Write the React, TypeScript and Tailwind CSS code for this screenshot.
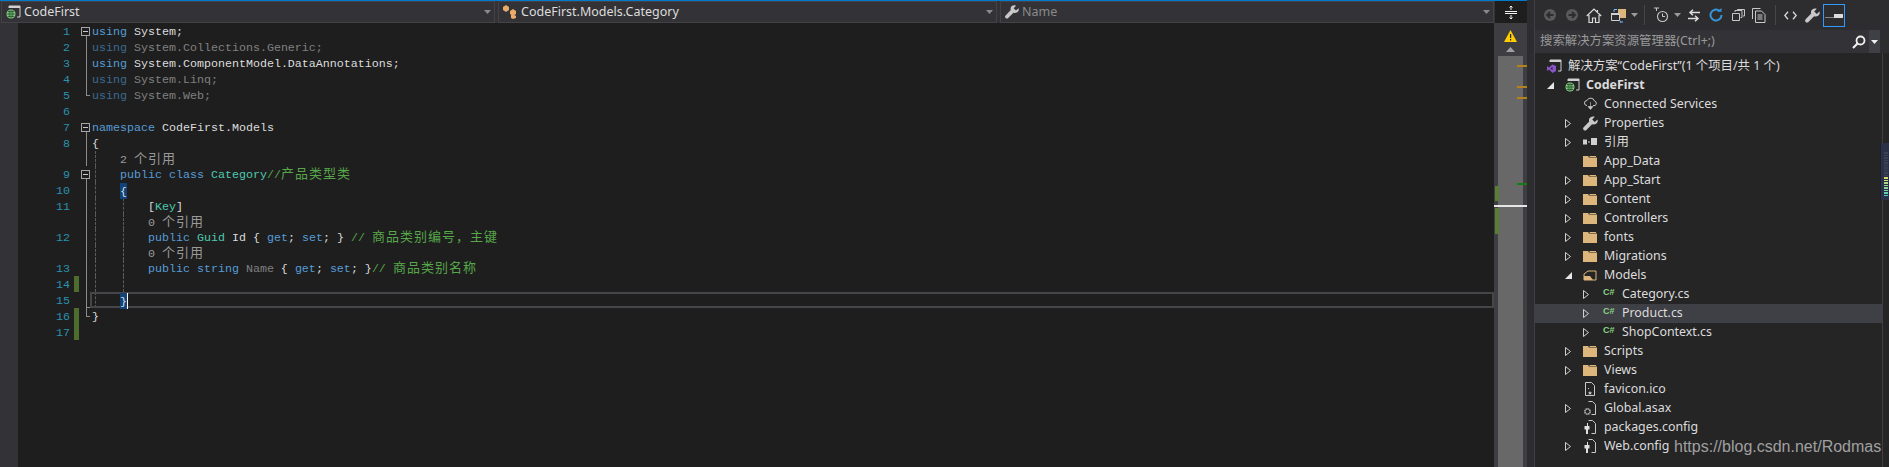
import type { ReactNode } from "react"

const mono = "font-['Liberation_Mono','Noto_Sans_CJK_SC',monospace] text-[11.67px] leading-[16px] whitespace-pre"
const ui = "font-['Noto_Sans','Noto_Sans_CJK_SC',sans-serif]"

function Cjk({ children }: { children: ReactNode }) {
  return <span className="font-['Noto_Sans_CJK_SC',sans-serif] text-[13px] leading-[8px] tracking-[1px]">{children}</span>
}
const K = ({ children }: { children: ReactNode }) => <span className="text-[#569cd6]">{children}</span>
const KD = ({ children }: { children: ReactNode }) => <span className="text-[#3c6a8f]">{children}</span>
const T = ({ children }: { children: ReactNode }) => <span className="text-[#4ec9b0]">{children}</span>
const C = ({ children }: { children: ReactNode }) => <span className="text-[#57a64a]">{children}</span>
const W = ({ children }: { children: ReactNode }) => <span className="text-[#dcdcdc]">{children}</span>
const D = ({ children }: { children: ReactNode }) => <span className="text-[#808080]">{children}</span>

function FoldBox() {
  return (
    <span className="absolute left-[81px] top-[4px] w-[9px] h-[9px] border border-[#a5a5a5] bg-[#1e1e1e] flex items-center justify-center">
      <span className="w-[5px] h-px bg-[#c8c8c8]" />
    </span>
  )
}

function Brace({ children, caret }: { children: ReactNode; caret?: boolean }) {
  return (
    <span className={`relative z-10 inline-block h-[16px] pt-px bg-[#114279] text-[#dcdcdc] ${caret ? "border-r border-white" : ""}`}>
      {children}
    </span>
  )
}

type Fold = "box" | "line" | "end" | "endfull" | "none"

function Row({
  num,
  fold = "none",
  changed,
  guides = [],
  hint,
  current,
  children,
}: {
  num?: number
  fold?: Fold
  changed?: boolean
  guides?: number[]
  hint?: boolean
  current?: boolean
  children?: ReactNode
}) {
  return (
    <div className={`relative flex items-start ${hint ? "h-[15px]" : "h-[16px]"}`}>
      <span className="w-[71px] pt-px pr-[1px] text-right text-[#2b91af] shrink-0">{num}</span>
      <span className={`w-[5px] h-full ml-[3px] shrink-0 ${changed ? "bg-[#4c6d2d]" : ""}`} />
      <span className="pl-[13px] pt-px">{children}</span>
      {fold === "line" && <span className="absolute left-[86px] top-0 bottom-0 w-px bg-[#8c8c8c]" />}
      {fold === "box" && <span className="absolute left-[86px] top-[12px] bottom-0 w-px bg-[#8c8c8c]" />}
      {fold === "box" && <FoldBox />}
      {fold === "end" && (
        <span className="absolute left-[86px] top-0 h-[9px] w-[4px] border-l border-b border-[#8c8c8c]" />
      )}
      {fold === "endfull" && (
        <span className="absolute left-[86px] top-0 bottom-0 w-[4px] border-l border-b border-[#8c8c8c]" />
      )}
      {guides.map((g) => (
        <span key={g} className="absolute top-0 bottom-0 w-0 border-l border-dashed border-[#5a5a5a]" style={{ left: g }} />
      ))}
      {current && (
        <span className="absolute left-[90px] right-0 top-0 bottom-0 border-2 border-[#46464a]" />
      )}
    </div>
  )
}

function Combo({ width, children, dim }: { width: string; children: ReactNode; dim?: boolean }) {
  return (
    <div className={`${width} h-[22px] shrink-0 flex items-center border border-[#434346] bg-[#333337] ${dim ? "text-[#8a8a8a]" : "text-[#dcdcdc]"}`}>
      {children}
      <svg className="ml-auto mr-[3px]" width="7" height="4" viewBox="0 0 7 4"><path d="M0 0h7L3.5 4z" fill="#8a8a8e" /></svg>
    </div>
  )
}

function ProjectIcon() {
  return (
    <svg width="15" height="14" viewBox="0 0 15 14">
      <path d="M3 3V1h11v11h-3" fill="none" stroke="#d0d0d0" />
      <rect x="3" y="1" width="11" height="2" fill="#d0d0d0" />
      <circle cx="5" cy="9" r="4.5" fill="#8cd18c" />
      <path d="M1 9h8M5 5v8M2 6.5h6M2 11.5h6M3.2 5.5v7M6.8 5.5v7" stroke="#25522a" strokeWidth="0.8" />
    </svg>
  )
}

function Folder() {
  return (
    <svg width="14" height="12" viewBox="0 0 14 12">
      <path d="M0 1h5l1 1.5h8V12H0z" fill="#dcb67a" />
      <path d="M6 1h7v1H7z" fill="#dcb67a" />
    </svg>
  )
}
function OpenFolder() {
  return (
    <svg width="14" height="12" viewBox="0 0 14 12">
      <path d="M1 11V5l4-3h8v9z" fill="none" stroke="#dcb67a" />
      <path d="M1 7h6l3 4H1z" fill="#dcb67a" />
    </svg>
  )
}
function CsIcon() {
  return <span className="text-[#89d185] font-['Liberation_Sans',sans-serif] font-bold text-[9px] leading-none -mt-[3px] ml-[2px]">C#</span>
}
function WrenchIcon({ color = "#c8c8c8", size = 14 }: { color?: string; size?: number }) {
  return (
    <svg width={size} height={size} viewBox="0 0 14 14">
      <path d="M13.5 3.2 11 5.6 8.6 3.2 11 .8C9-.2 6.6.6 5.8 2.6c-.3.9-.3 1.7 0 2.5L.6 10.4c-.7.7-.7 1.8 0 2.6.8.7 1.9.7 2.6 0l5.3-5.3c2.2.8 4.6-.3 5.2-2.500.2-.7.1-1.4-.2-2z" fill={color} />
    </svg>
  )
}
function FileIcon({ kind }: { kind: "ico" | "gear" | "config" }) {
  return (
    <svg width="14" height="15" viewBox="0 0 14 15">
      <path d={kind === "ico" ? "M2.5.5h6l3 3v10h-9z" : "M5.5.5h4l3 3v10h-4"} fill="none" stroke="#c8c8c8" />
      {kind === "ico" && <path d="M5 6h1v1H5zM7 9l.6 1.3 1.4.1-1 1 .3 1.4L7 12l-1.3.8.3-1.4-1-1 1.4-.1z" fill="#c8c8c8" />}
      {kind === "gear" && (
        <g>
          <circle cx="4.5" cy="10.5" r="2.6" fill="none" stroke="#b4b4b4" strokeWidth="1.6" strokeDasharray="1.4 .6" />
          <circle cx="4.5" cy="10.5" r="3" fill="none" stroke="#8a8a8a" strokeWidth=".6" />
        </g>
      )}
      {kind === "config" && <path d="M3 3v3H1.5v3.5H3V14h2V9.500h1.500V6H5V3H4v3H3z" fill="#e0e0e0" />}
    </svg>
  )
}

function Chevron({ open }: { open?: boolean }) {
  if (open) {
    return <svg width="7" height="7" viewBox="0 0 7 7"><path d="M7 0v7H0z" fill="#e6e6e6" /></svg>
  }
  return <svg width="6" height="9" viewBox="0 0 6 9"><path d="M.5.5l5 4-5 4z" fill="none" stroke="#d0d0d0" /></svg>
}

function TreeRow({
  level,
  arrow,
  icon,
  selected,
  bold,
  children,
}: {
  level: 1 | 2 | 3
  arrow?: "open" | "closed"
  icon: ReactNode
  selected?: boolean
  bold?: boolean
  children: ReactNode
}) {
  const pad = level === 1 ? "pl-[8px]" : level === 2 ? "pl-[26px]" : "pl-[44px]"
  return (
    <div className={`h-[19px] flex items-center ${pad} ${selected ? "bg-[#3f3f46]" : ""}`}>
      <span className="w-[22px] flex justify-start pl-[4px] shrink-0">
        {arrow === "open" && <Chevron open />}
        {arrow === "closed" && <Chevron />}
      </span>
      <span className="w-[21px] flex shrink-0">{icon}</span>
      <span className={bold ? "font-bold" : ""}>{children}</span>
    </div>
  )
}

function Sep() {
  return <span className="w-px h-[20px] bg-[#46464a] shrink-0" />
}
function Caret() {
  return <svg width="7" height="4" viewBox="0 0 7 4"><path d="M0 0h7L3.500 4z" fill="#9a9a9a" /></svg>
}

function Toolbar() {
  return (
    <div className="h-[30px] flex items-center pl-[4px] shrink-0">
      <span className="w-[22px] flex justify-center">
        <svg width="14" height="14" viewBox="0 0 14 14"><circle cx="7" cy="7" r="6" fill="#5a5a5a" /><path d="M10.500 7H4M7 4 4 7l3 3" stroke="#2d2d30" strokeWidth="1.800" fill="none" /></svg>
      </span>
      <span className="w-[22px] flex justify-center">
        <svg width="14" height="14" viewBox="0 0 14 14"><circle cx="7" cy="7" r="6" fill="#5a5a5a" /><path d="M3.500 7H10M7 4l3 3-3 3" stroke="#2d2d30" strokeWidth="1.800" fill="none" /></svg>
      </span>
      <span className="w-[22px] flex justify-center">
        <svg width="16" height="15" viewBox="0 0 16 15"><path d="M.8 8 8 1l7.200 7M3 7v7.500h3.500V10h3v4.500H13V7M11.500 2v3" fill="none" stroke="#dcdcdc" strokeWidth="1.200" /></svg>
      </span>
      <span className="w-[26px] flex justify-center">
        <svg width="15" height="15" viewBox="0 0 15 15">
          <path d="M7 1h8v9H7z" fill="#dcb67a" />
          <path d="M.5 5.500h8v7h-8z" fill="#2d2d30" stroke="#d0d0d0" />
          <rect x="0" y="5" width="9" height="2" fill="#d0d0d0" />
          <path d="M3 1.500H6M12 14h-2" stroke="#75beff" strokeWidth="1.200" />
          <path d="M2 3l1.500-2v3zM10 12.500 8.500 14 10 15z" fill="#75beff" />
        </svg>
      </span>
      <span className="w-[7px] flex justify-center"><Caret /></span>
      <span className="w-[6px]" />
      <Sep />
      <span className="w-[5px]" />
      <span className="w-[22px] flex justify-center">
        <svg width="15" height="16" viewBox="0 0 15 16"><path d="M0 1h5M2.500 1v3" stroke="#c8c8c8" fill="none" /><circle cx="8.500" cy="9.500" r="5" fill="none" stroke="#c8c8c8" strokeWidth="1.100" /><path d="M8.500 6.500v3h2.500" fill="none" stroke="#c8c8c8" /></svg>
      </span>
      <span className="w-[2px]" />
      <span className="w-[7px] flex justify-center"><Caret /></span>
      <span className="w-[2px]" />
      <span className="w-[22px] flex justify-center">
        <svg width="14" height="13" viewBox="0 0 14 13"><path d="M13 3.500H3M6 .8 3 3.500l3 2.700M1 9.500h10M8 6.800l3 2.700-3 2.700" fill="none" stroke="#dcdcdc" strokeWidth="1.500" /></svg>
      </span>
      <span className="w-[22px] flex justify-center">
        <svg width="14" height="14" viewBox="0 0 14 14"><path d="M10.500 2.800A5.500 5.500 0 1 0 12.500 7" fill="none" stroke="#3794d8" strokeWidth="2" /><path d="M8 3.800h4.500V0z" fill="#3794d8" /></svg>
      </span>
      <span className="w-[22px] flex justify-center">
        <svg width="13" height="12" viewBox="0 0 13 12"><path d="M.5 4.500h7v7h-7zM3 3V1.500h7v7H8.500M5.500 1V.5h7v6.500H11" fill="none" stroke="#c8c8c8" /></svg>
      </span>
      <span className="w-[20px] flex justify-center">
        <svg width="14" height="15" viewBox="0 0 14 15"><path d="M.5 11V.5h8M3.500 3h6l3.500 3.500v8H3.500z" fill="none" stroke="#c8c8c8" /><path d="M5.500 7h5M5.500 9h5M5.500 11h5" stroke="#c8c8c8" /></svg>
      </span>
      <span className="w-[6px]" />
      <Sep />
      <span className="w-[3px]" />
      <span className="w-[22px] flex justify-center">
        <svg width="13" height="9" viewBox="0 0 13 9"><path d="M4 .8.8 4.500 4 8.200M9 .8l3.200 3.700L9 8.200" fill="none" stroke="#dcdcdc" strokeWidth="1.300" /></svg>
      </span>
      <span className="w-[22px] flex justify-center"><WrenchIcon size={15} /></span>
      <span className="w-[22px] h-[23px] border border-[#3399ff] flex items-end justify-center pb-[7px] shrink-0">
        <svg width="18" height="5" viewBox="0 0 18 5"><path d="M0 3.500h9V4H0z" fill="#dcdcdc" /><path d="M9 0h9v4H9z" fill="#dcdcdc" /></svg>
      </span>
    </div>
  )
}

export default function App() {
  return (
    <div className="w-[1889px] h-[467px] overflow-hidden flex bg-[#2d2d30] relative">
      {/* editor */}
      <div className="w-[1527px] h-full flex flex-col shrink-0 border-t border-[#007acc]">
        <div className={`h-[22px] flex shrink-0 bg-[#333337] text-[12.5px] pl-[1px] gap-[3px] pr-[33px] ${ui}`}>
          <Combo width="w-[494px]">
            <span className="ml-[4px] mr-[3px] flex"><ProjectIcon /></span>
            CodeFirst
          </Combo>
          <Combo width="w-[499px]">
            <svg className="ml-[4px] mr-[4px]" width="14" height="14" viewBox="0 0 14 14">
              <path d="M3 0l3 2v3L3 7 0 5V2zM10 4l3 2v3l-3 2-3-2V6zM8 10l2-1 3 2v2l-3 1-2-1z" fill="#e8ab6a" />
            </svg>
            CodeFirst.Models.Category
          </Combo>
          <Combo width="flex-1" dim>
            <span className="ml-[4px] mr-[3px] flex"><WrenchIcon /></span>
            Name
          </Combo>
        </div>

        <div className="flex-1 flex min-h-0">
          <div className={`flex-1 min-w-0 bg-[#1e1e1e] ${mono}`}>
            <div className="h-full border-l-[18px] border-[#333337]">
              <div className="-ml-[18px]">
                <Row num={1} fold="box"><K>using</K> <W>System;</W></Row>
                <Row num={2} fold="line"><KD>using</KD> <D>System.Collections.Generic;</D></Row>
                <Row num={3} fold="line"><K>using</K> <W>System.ComponentModel.DataAnnotations;</W></Row>
                <Row num={4} fold="line"><KD>using</KD> <D>System.Linq;</D></Row>
                <Row num={5} fold="end"><KD>using</KD> <D>System.Web;</D></Row>
                <Row num={6} />
                <Row num={7} fold="box"><K>namespace</K> <W>CodeFirst.Models</W></Row>
                <Row num={8} fold="line"><W>{"{"}</W></Row>
                <Row hint fold="line" guides={[95]}><span className="text-[#999999]">{"    2 "}<Cjk>个引用</Cjk></span></Row>
                <Row num={9} fold="box" guides={[95]}><K>{"    public class "}</K><T>Category</T><C>//<Cjk>产品类型类</Cjk></C></Row>
                <Row num={10} fold="line" guides={[95]}>
                  {"    "}<Brace>{"{"}</Brace>
                </Row>
                <Row num={11} fold="line" guides={[95, 123]}><W>{"        ["}</W><T>Key</T><W>]</W></Row>
                <Row hint fold="line" guides={[95, 123]}><span className="text-[#999999]">{"        0 "}<Cjk>个引用</Cjk></span></Row>
                <Row num={12} fold="line" guides={[95, 123]}>
                  <K>{"        public "}</K><T>Guid</T><W>{" Id { "}</W><K>get</K><W>; </W><K>set</K><W>{"; } "}</W><C>{"// "}<Cjk>商品类别编号，主键</Cjk></C>
                </Row>
                <Row hint fold="line" guides={[95, 123]}><span className="text-[#999999]">{"        0 "}<Cjk>个引用</Cjk></span></Row>
                <Row num={13} fold="line" guides={[95, 123]}>
                  <K>{"        public string "}</K><D>Name</D><W>{" { "}</W><K>get</K><W>; </W><K>set</K><W>{"; }"}</W><C>{"// "}<Cjk>商品类别名称</Cjk></C>
                </Row>
                <Row num={14} fold="line" changed guides={[95, 123]} />
                <Row num={15} fold="endfull" guides={[95]} current>
                  {"    "}<Brace caret>{"}"}</Brace>
                </Row>
                <Row num={16} fold="end" changed><W>{"}"}</W></Row>
                <Row num={17} changed />
              </div>
            </div>
          </div>

          {/* editor scrollbar */}
          <div className="w-[33px] h-full bg-[#3e3e42] relative flex flex-col items-center shrink-0">
            <svg className="mt-[7px]" width="13" height="12" viewBox="0 0 13 12">
              <path d="M6.500 0 13 12H0z" fill="#ffcc00" />
              <path d="M6 4h1.200v4H6zM6 9h1.200v1.500H6z" fill="#1e1e1e" />
            </svg>
            <svg className="mt-[5px]" width="9" height="5" viewBox="0 0 9 5"><path d="M4.500 0 9 5H0z" fill="#a0a0a0" /></svg>
            <div className="w-[25px] flex-1 mt-[4px] bg-[#686868]" />
            <span className="absolute right-0 top-[42px] w-[10px] h-[2px] bg-[#b5811c]" />
            <span className="absolute right-0 top-[63px] w-[10px] h-[2px] bg-[#b5811c]" />
            <span className="absolute right-0 top-[74px] w-[10px] h-[2px] bg-[#b5811c]" />
            <span className="absolute right-0 top-[160px] w-[10px] h-[2px] bg-[#147d14]" />
            <span className="absolute left-[1px] top-[163px] w-[4px] h-[15px] bg-[#5a7d34]" />
            <span className="absolute left-[1px] top-[185px] w-[4px] h-[26px] bg-[#5a7d34]" />
            <span className="absolute left-0 right-0 top-[182px] h-[2px] bg-[#e6e6e6]" />
          </div>
        </div>
      </div>

      {/* split handle */}
      <div className="absolute left-[1495px] top-[1px] w-[32px] h-[22px] bg-[#1e1e1e] flex items-center justify-center">
        <svg width="12" height="13" viewBox="0 0 12 13">
          <path d="M0 5.500h12M0 7.500h12" stroke="#f0f0f0" />
          <path d="M6 0v4M6 9v4M4.500 1.500 6 0l1.500 1.500M4.500 11.500 6 13l1.500-1.500" stroke="#f0f0f0" fill="none" />
        </svg>
      </div>

      <div className="w-[7px] shrink-0" />
      <div className="w-px shrink-0 bg-[#3f3f46]" />

      {/* solution explorer */}
      <div className={`flex-1 h-full flex flex-col min-w-0 text-[#dcdcdc] text-[12.4px] ${ui}`}>
        <Toolbar />
        <div className="h-[23px] shrink-0 mr-[9px] bg-[#333337] flex items-center pl-[5px] text-[#999999]">
          搜索解决方案资源管理器(Ctrl+;)
          <svg className="ml-auto" width="14" height="14" viewBox="0 0 14 14">
            <circle cx="8.500" cy="5.500" r="4" fill="none" stroke="#f0f0f0" strokeWidth="1.800" />
            <path d="M5.500 8.500 1 13" stroke="#f0f0f0" strokeWidth="2.200" />
          </svg>
          <span className="w-[11px] h-full ml-[3px] bg-[#3f3f46] flex items-center justify-center">
            <svg width="7" height="4" viewBox="0 0 7 4"><path d="M0 0h7L3.500 4z" fill="#f0f0f0" /></svg>
          </span>
        </div>
        <div className="flex-1 flex min-h-0 bg-[#252526]">
          <div className="flex-1 pt-[3.500px] min-w-0">
            <div className="h-[19px] flex items-center pl-[12px]">
              <span className="w-[21px] flex shrink-0">
                <svg width="15" height="14" viewBox="0 0 15 14">
                  <path d="M3 3V1h11v11h-3" fill="none" stroke="#d0d0d0" />
                  <rect x="3" y="1" width="11" height="2" fill="#d0d0d0" />
                  <path d="M0 7l2 1.500L5.500 5.500 9 7v5L5.500 14 2 10.500 0 12zM5.500 8l-2 1.500 2 1.500z" fill="#8a55c8" />
                </svg>
              </span>
              解决方案“CodeFirst”(1 个项目/共 1 个)
            </div>
            <TreeRow level={1} arrow="open" bold icon={<ProjectIcon />}>CodeFirst</TreeRow>
            <TreeRow level={2} icon={
              <svg width="15" height="14" viewBox="0 0 15 14">
                <path d="M4 8.500A2.500 2.500 0 0 1 4 3.500 4 4 0 0 1 11.500 4 2.400 2.400 0 0 1 12 8.500H10" fill="none" stroke="#c8c8c8" />
                <path d="M7.500 5v7M5 9.500l2.500 3 2.500-3z" stroke="#c8c8c8" fill="#c8c8c8" strokeWidth=".6" />
              </svg>
            }>Connected Services</TreeRow>
            <TreeRow level={2} arrow="closed" icon={<WrenchIcon size={15} />}>Properties</TreeRow>
            <TreeRow level={2} arrow="closed" icon={
              <svg width="14" height="8" viewBox="0 0 14 8"><path d="M0 1.500h4v5H0zM8 0h6v7H8z" fill="#d0d0d0" /><path d="M5 4h2" stroke="#d0d0d0" /></svg>
            }>引用</TreeRow>
            <TreeRow level={2} icon={<Folder />}>App_Data</TreeRow>
            <TreeRow level={2} arrow="closed" icon={<Folder />}>App_Start</TreeRow>
            <TreeRow level={2} arrow="closed" icon={<Folder />}>Content</TreeRow>
            <TreeRow level={2} arrow="closed" icon={<Folder />}>Controllers</TreeRow>
            <TreeRow level={2} arrow="closed" icon={<Folder />}>fonts</TreeRow>
            <TreeRow level={2} arrow="closed" icon={<Folder />}>Migrations</TreeRow>
            <TreeRow level={2} arrow="open" icon={<OpenFolder />}>Models</TreeRow>
            <TreeRow level={3} arrow="closed" icon={<CsIcon />}>Category.cs</TreeRow>
            <TreeRow level={3} arrow="closed" selected icon={<CsIcon />}>Product.cs</TreeRow>
            <TreeRow level={3} arrow="closed" icon={<CsIcon />}>ShopContext.cs</TreeRow>
            <TreeRow level={2} arrow="closed" icon={<Folder />}>Scripts</TreeRow>
            <TreeRow level={2} arrow="closed" icon={<Folder />}>Views</TreeRow>
            <TreeRow level={2} icon={<FileIcon kind="ico" />}>favicon.ico</TreeRow>
            <TreeRow level={2} arrow="closed" icon={<FileIcon kind="gear" />}>Global.asax</TreeRow>
            <TreeRow level={2} icon={<FileIcon kind="config" />}>packages.config</TreeRow>
            <TreeRow level={2} arrow="closed" icon={<FileIcon kind="config" />}>Web.config</TreeRow>
          </div>
          <div className="w-[7px] shrink-0 border-l border-[#3f3f46]" />
        </div>
      </div>

      {/* tree scrollbar thumb */}
      <div className="absolute left-[1880px] top-[143px] w-[9px] h-[57px] bg-[#2a3046] border-l border-[#1b1f2e] flex flex-col justify-end items-end gap-[1px] pr-[1px] pb-[4px]">
        {["#3b4254","#3b4254","#3b4254","#3b4254","#3b4254","#3b4254","#3b4254","#3b4254","#3b4254","#3b4254","#d6d96a","#c4d875","#b0d681","#9dd48d","#8ad299","#77d0a5","#64ceb1","#51ccbd"].map((c, i) => (
          <span key={i} className="w-[4px] h-[1.500px]" style={{ background: c }} />
        ))}
      </div>

      {/* watermark */}
      <span className="absolute left-[1674px] top-[436px] text-[16px] leading-[22px] text-[#a0a0a0] font-['Liberation_Sans',sans-serif] whitespace-nowrap">
        https://blog.csdn.net/Rodmas
      </span>
    </div>
  )
}
